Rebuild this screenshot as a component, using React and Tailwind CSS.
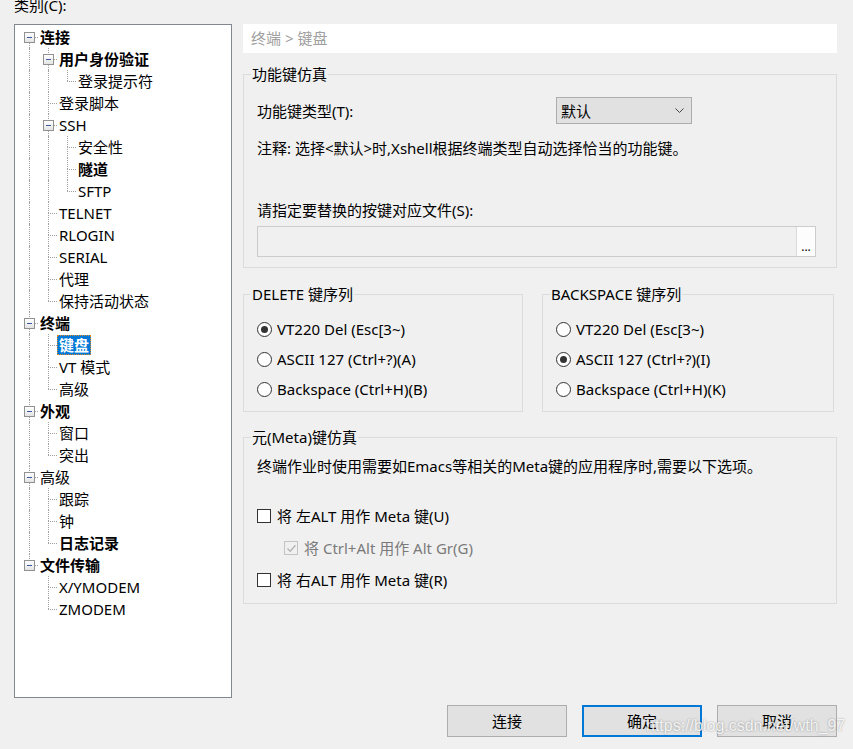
import React from 'react';

const tree = [
  { t: '连接', b: true, c: [
    { t: '用户身份验证', b: true, c: [{ t: '登录提示符' }] },
    { t: '登录脚本' },
    { t: 'SSH', c: [{ t: '安全性' }, { t: '隧道', b: true }, { t: 'SFTP' }] },
    { t: 'TELNET' },
    { t: 'RLOGIN' },
    { t: 'SERIAL' },
    { t: '代理' },
    { t: '保持活动状态' },
  ] },
  { t: '终端', b: true, c: [{ t: '键盘', b: true, sel: true }, { t: 'VT 模式' }, { t: '高级' }] },
  { t: '外观', b: true, c: [{ t: '窗口' }, { t: '突出' }] },
  { t: '高级', c: [{ t: '跟踪' }, { t: '钟' }, { t: '日志记录', b: true }] },
  { t: '文件传输', b: true, c: [{ t: 'X/YMODEM' }, { t: 'ZMODEM' }] },
];

// flatten into rows, remembering which ancestor columns keep a line going
const flatten = (nodes, level = 0, trail = [], out = []) => {
  nodes.forEach((n, i) => {
    const hasNext = i < nodes.length - 1;
    out.push({ ...n, level, trail, hasNext, first: level === 0 && i === 0 });
    if (n.c) flatten(n.c, level + 1, [...trail, hasNext], out);
  });
  return out;
};

const rows = flatten(tree);

const VLine = ({ className }) => (
  <div className={`absolute left-[10px] w-0 border-l border-dotted border-[#a0a0a0] ${className}`} />
);

const TreeRow = ({ row }) => (
  <div className="flex h-[22px] items-center">
    {row.trail.map((cont, i) => (
      <div key={i} className="relative h-full w-[19px] shrink-0">
        {cont && <VLine className="top-0 bottom-0" />}
      </div>
    ))}
    <div className="relative h-full w-[19px] shrink-0">
      {!row.first && <VLine className="top-0 h-[11px]" />}
      {row.hasNext && <VLine className="top-[11px] bottom-0" />}
      <div className="absolute left-[10px] right-0 top-[11px] h-0 border-t border-dotted border-[#a0a0a0]" />
      {row.c && (
        <div className="absolute left-[5px] top-[6px] flex h-[11px] w-[11px] items-center justify-center border border-[#919191] bg-gradient-to-b from-white to-[#e4e4e4]">
          <div className="h-[1px] w-[5px] bg-[#3c5aa0]" />
        </div>
      )}
    </div>
    <span
      className={`whitespace-nowrap px-[2px] leading-[20px] ${row.b ? 'font-bold' : ''} ${
        row.sel ? 'bg-[#0078d7] text-white outline outline-1 outline-dotted outline-[#e08a28] -outline-offset-1' : 'text-black'
      }`}
    >
      {row.t}
    </span>
  </div>
);

const Group = ({ legend, className = '', children }) => (
  <fieldset className={`border border-[#dcdcdc] ${className}`}>
    <legend className="ml-[7px] px-[1px] leading-[18px]">{legend}</legend>
    {children}
  </fieldset>
);

const Radio = ({ checked, label }) => (
  <div className="flex h-[30px] items-center gap-[5px]">
    <div className="flex h-[15px] w-[15px] shrink-0 items-center justify-center rounded-full border border-[#333] bg-white">
      {checked && <div className="h-[7px] w-[7px] rounded-full bg-[#333]" />}
    </div>
    <span className="leading-[20px]">{label}</span>
  </div>
);

const Check = ({ label, disabled, checked }) => (
  <div className="flex h-[32px] items-center gap-[6px]">
    <div className={`flex h-[14px] w-[14px] shrink-0 items-center justify-center border ${disabled ? 'border-[#c4c4c4] bg-[#f0f0f0]' : 'border-[#333] bg-white'}`}>
      {checked && (
        <svg width="11" height="11" viewBox="0 0 11 11">
          <polyline points="1.5,5.5 4.2,8.2 9.5,2.2" fill="none" stroke="#b4b4b4" strokeWidth="1.4" />
        </svg>
      )}
    </div>
    <span className={`leading-[20px] ${disabled ? 'text-[#7a7a7a]' : ''}`}>{label}</span>
  </div>
);

const Button = ({ children, focus }) => (
  <button
    className={`h-[32px] w-[120px] bg-[#e1e1e1] leading-[20px] ${focus ? 'border-2 border-[#0078d7]' : 'border border-[#adadad]'}`}
  >
    {children}
  </button>
);

export default function App() {
  return (
    <div className="relative h-[749px] w-[853px] overflow-hidden bg-[#f0f0f0] font-['Noto_Sans','Noto_Sans_CJK_SC',sans-serif] text-[15px] text-black">
      <div className="flex h-[698px]">
        {/* category tree */}
        <div className="ml-[14px] flex w-[218px] flex-col">
          <div className="-mt-[2px] h-[26px] leading-[14px]">类别(C):</div>
          <div className="h-[674px] border border-[#828790] bg-white pl-[4px] pt-[1px]">
            {rows.map((r, i) => (
              <TreeRow key={i} row={r} />
            ))}
          </div>
        </div>

        {/* settings */}
        <div className="ml-[11px] flex w-[594px] flex-col pt-[24px]">
          <div className="flex h-[29px] items-center bg-white px-[8px] text-[#a0a0a0]">终端 &gt; 键盘</div>

          <Group legend="功能键仿真" className="mt-[12px] pb-[10px]">
            <div className="px-[13px]">
              <div className="mt-[14px] flex h-[27px] items-center">
                <span className="w-[299px] leading-[20px]">功能键类型(T):</span>
                <div className="flex h-[27px] w-[136px] items-center justify-between border border-[#adadad] bg-[#e1e1e1] pl-[4px] pr-[7px]">
                  <span className="leading-[20px]">默认</span>
                  <svg width="9" height="6" viewBox="0 0 9 6">
                    <polyline points="0.5,0.5 4.5,4.5 8.5,0.5" fill="none" stroke="#444" strokeWidth="1" />
                  </svg>
                </div>
              </div>
              <div className="mt-[14px] leading-[20px]">注释: 选择&lt;默认&gt;时,Xshell根据终端类型自动选择恰当的功能键。</div>
              <div className="mt-[42px] leading-[20px]">请指定要替换的按键对应文件(S):</div>
              <div className="mt-[6px] flex h-[31px] w-[559px] border border-[#cccccc] bg-[#f0f0f0]">
                <div className="flex-1" />
                <div className="flex w-[19px] items-end justify-center border-l border-[#dadada] bg-[#fdfdfd] pb-[3px] text-[12px] leading-[12px]">...</div>
              </div>
            </div>
          </Group>

          <div className="mt-[17px] flex">
            <Group legend="DELETE 键序列" className="w-[280px] pb-[7px]">
              <div className="mt-[11px] px-[13px]">
                <Radio checked label="VT220 Del (Esc[3~)" />
                <Radio label="ASCII 127 (Ctrl+?)(A)" />
                <Radio label="Backspace (Ctrl+H)(B)" />
              </div>
            </Group>
            <Group legend="BACKSPACE 键序列" className="ml-[19px] w-[292px] pb-[7px]">
              <div className="mt-[11px] px-[13px]">
                <Radio label="VT220 Del (Esc[3~)" />
                <Radio checked label="ASCII 127 (Ctrl+?)(I)" />
                <Radio label="Backspace (Ctrl+H)(K)" />
              </div>
            </Group>
          </div>

          <Group legend="元(Meta)键仿真" className="mt-[16px] pb-[7px]">
            <div className="px-[13px]">
              <div className="mt-[10px] leading-[20px]">终端作业时使用需要如Emacs等相关的Meta键的应用程序时,需要以下选项。</div>
              <div className="mt-[24px]">
                <Check label="将 左ALT 用作 Meta 键(U)" />
                <div className="pl-[27px]">
                  <Check disabled checked label="将 Ctrl+Alt 用作 Alt Gr(G)" />
                </div>
                <Check label="将 右ALT 用作 Meta 键(R)" />
              </div>
            </div>
          </Group>
        </div>
      </div>

      <div className="mt-[7px] flex justify-end gap-[15px] pr-[16px]">
        <Button>连接</Button>
        <Button focus>确定</Button>
        <Button>取消</Button>
      </div>

      <span className="pointer-events-none absolute left-[646px] top-[716px] font-['Liberation_Sans',sans-serif] text-[16px] leading-[20px] text-white/85 [text-shadow:0_0_2px_rgba(0,0,0,0.4)]">
        https://blog.csdn.net/wth_97
      </span>
    </div>
  );
}
